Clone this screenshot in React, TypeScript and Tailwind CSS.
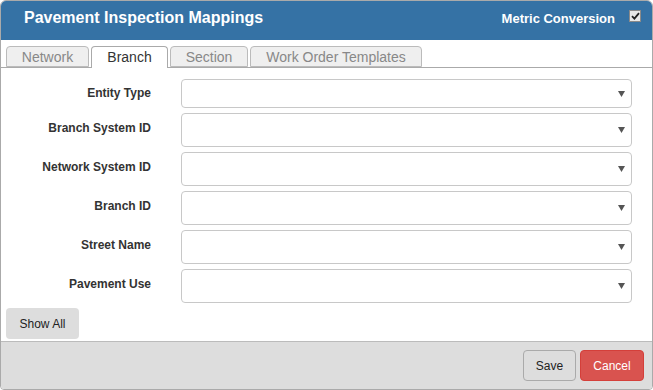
import React from "react";

const rows = [
  { label: "Entity Type", h: "h-[29px]", lab: "w-[150px] text-right text-[12px] font-bold text-[#333] mb-[2px]" },
  { label: "Branch System ID", h: "h-[34px]", lab: "w-[150px] text-right text-[12px] font-bold text-[#333] mb-[4px]" },
  { label: "Network System ID", h: "h-[34px]", lab: "w-[150px] text-right text-[12px] font-bold text-[#333] mb-[4px]" },
  { label: "Branch ID", h: "h-[34px]", lab: "w-[150px] text-right text-[12px] font-bold text-[#333] mb-[4px]" },
  { label: "Street Name", h: "h-[34px]", lab: "w-[150px] text-right text-[12px] font-bold text-[#333] mb-[4px]" },
  { label: "Pavement Use", h: "h-[34px]", lab: "w-[150px] text-right text-[12px] font-bold text-[#333] mb-[4px]" },
];

const tabs = [
  { t: "Network", w: "w-[83px]" },
  { t: "Branch", w: "w-[77px]" },
  { t: "Section", w: "w-[78px]" },
  { t: "Work Order Templates", w: "w-[172px]" },
];

export default function App() {
  return (
    <div className="w-[653px] h-[390px] bg-white border border-[#aaa] rounded-t-[6px] rounded-b-[4px] overflow-hidden flex flex-col font-['Liberation_Sans',Arial,sans-serif]">
      <div className="h-[39px] shrink-0 bg-[#3572a5] flex items-center justify-between pl-[23px] pr-[11px] pb-[5px]">
        <div className="text-white font-bold text-[16px] leading-[18px]">Pavement Inspection Mappings</div>
        <div className="flex items-center gap-[14px]">
          <span className="text-white font-bold text-[13px] leading-[15px] mt-[1px]">Metric Conversion</span>
          <span className="w-[12px] h-[12px] bg-[#e8e8e8] border border-[#8a8a8a] flex items-center justify-center -mt-[5px]">
            <svg width="9" height="8" viewBox="0 0 9 8">
              <path d="M1 4.2 L3.4 6.6 L8 1.2" stroke="#222" strokeWidth="1.8" fill="none" />
            </svg>
          </span>
        </div>
      </div>
      <div className="h-[28px] shrink-0 pt-[6px] pl-[5px] flex gap-[2px] border-b border-[#aaa]">
        {tabs.map(({ t, w }) => {
          const active = t === "Branch";
          return (
            <div
              key={t}
              className={
                active
                  ? `${w} h-[22px] text-center border border-[#aaa] border-b-0 rounded-t-[4px] bg-white text-[#333] text-[14px] leading-[21px] relative z-10`
                  : `${w} h-[21px] text-center border border-[#bbb] rounded-t-[4px] bg-[#efefef] text-[#888] text-[14px] leading-[20px]`
              }
            >
              {t}
            </div>
          );
        })}
      </div>
      <div className="flex-1 flex flex-col pt-[11px] gap-[5px]">
        {rows.map((r) => (
          <div key={r.label} className={`flex items-center ${r.h}`}>
            <div className={r.lab}>{r.label}</div>
            <div className="ml-[30px] w-[451px] h-full border border-[#c8c8c8] rounded-[4px] flex items-center justify-end pr-[6px]">
              <svg width="7" height="6" viewBox="0 0 7 6">
                <path d="M0 0 H7 L3.5 6 Z" fill="#555" />
              </svg>
            </div>
          </div>
        ))}
        <div className="pl-[5px]">
          <button className="w-[73px] h-[31px] bg-[#ddd] rounded-[4px] text-[12px] text-[#222]">Show All</button>
        </div>
      </div>
      <div className="h-[48px] shrink-0 bg-[#ddd] border-t border-[#bbb] flex justify-end items-start pt-[8px] pr-[8px] gap-[4px]">
        <button className="w-[53px] h-[31px] border border-[#aaa] rounded-[4px] bg-[#ddd] text-[12px] text-[#222]">Save</button>
        <button className="w-[64px] h-[31px] border border-[#d43f3a] rounded-[4px] bg-[#d9534f] text-[12px] text-white">Cancel</button>
      </div>
    </div>
  );
}
